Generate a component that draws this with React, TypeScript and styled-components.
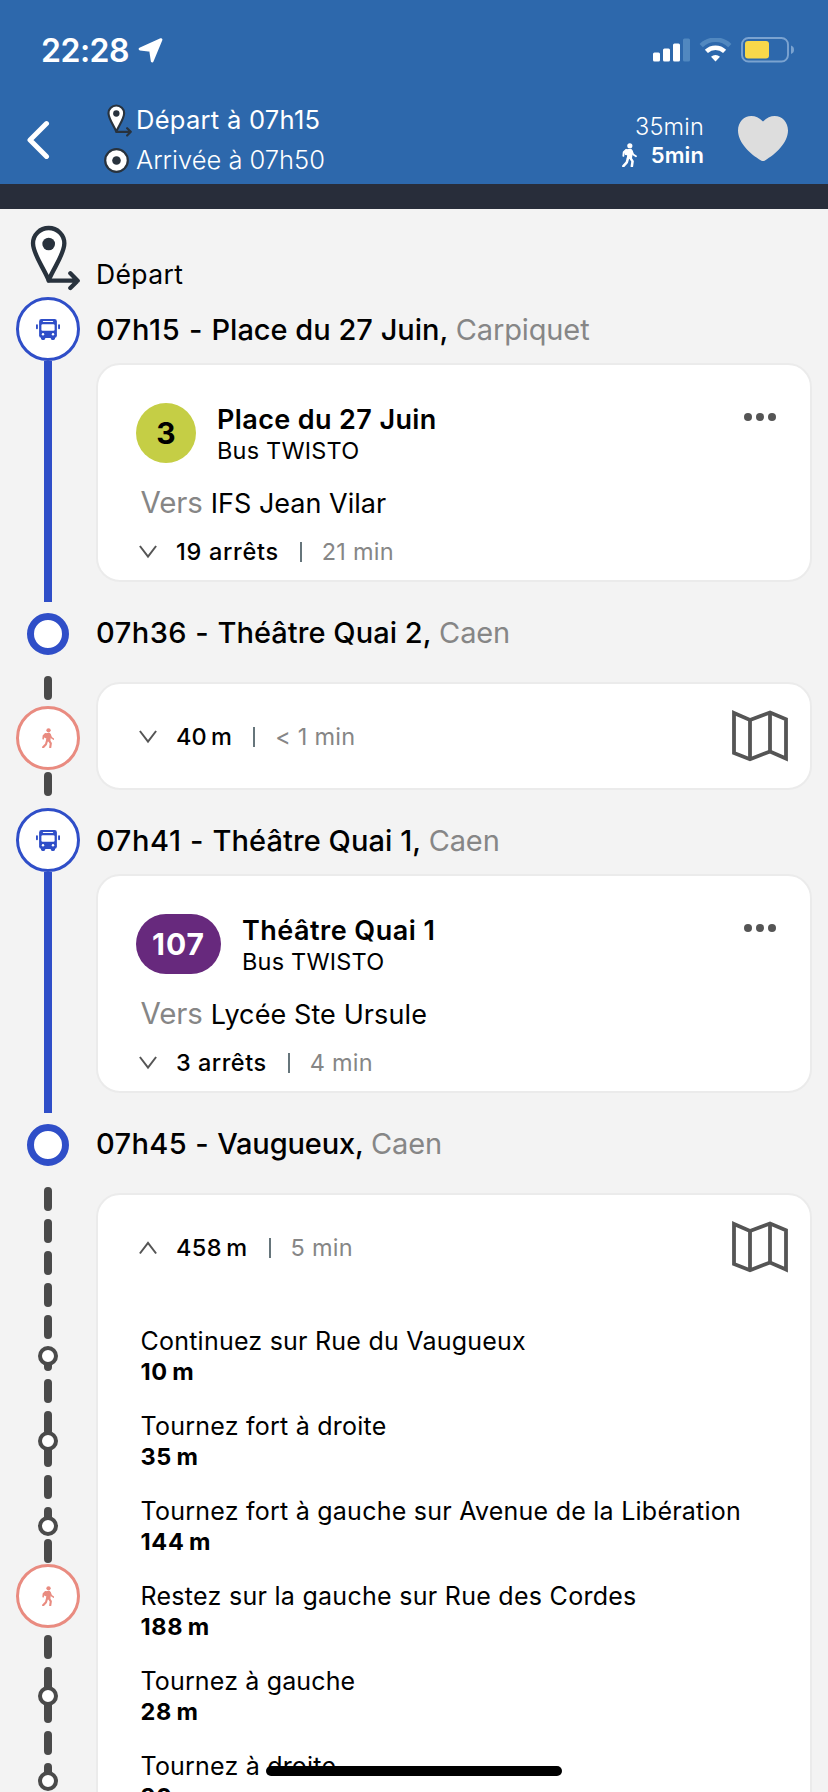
import React from 'react';
import styled, { createGlobalStyle } from 'styled-components';

const BLUE = '#2f4ec8';
const CORAL = '#e98b80';
const DASH = '#4a4a4a';
const INK = '#28323d';

const GlobalStyle = createGlobalStyle`
  * { box-sizing: border-box; }
  body {
    margin: 0;
    background: #f3f3f3;
    font-family: Inter, "Liberation Sans", sans-serif;
    color: #000;
  }
  svg { display: block; flex: none; }
`;

const Screen = styled.div`
  position: relative;
  width: 828px;
  height: 1792px;
  overflow: hidden;
  background: #f3f3f3;
`;

/* Header */

const Header = styled.header`
  height: 184px;
  background: #2d68ac;
  color: #fff;
`;

const StatusBar = styled.div`
  height: 96px;
  padding: 4px 33px 0 41px;
  display: flex;
  align-items: center;
`;

const Clock = styled.span`
  font-size: 32px;
  font-weight: 600;
  letter-spacing: -0.5px;
  margin-right: 9px;
`;

const StatusIcons = styled.div`
  margin-left: auto;
  display: flex;
  align-items: center;
  gap: 9px;
`;

const NavBar = styled.div`
  height: 88px;
  padding: 4px 40px 0 26px;
  display: flex;
`;

const BackButton = styled.button`
  width: 77px;
  height: 80px;
  padding: 0;
  border: 0;
  background: none;
  display: flex;
  align-items: center;
`;

const Schedule = styled.div`
  flex: 1;
`;

const ScheduleLine = styled.div<{ $light?: boolean; $ls: number }>`
  height: 40px;
  display: flex;
  align-items: center;
  font-size: 25.5px;
  line-height: 40px;
  font-weight: ${(p) => (p.$light ? 300 : 400)};
  letter-spacing: ${(p) => p.$ls}px;
`;

const ScheduleIcon = styled.span<{ $indent?: number }>`
  width: 33px;
  height: 40px;
  display: flex;
  align-items: center;
  padding-left: ${(p) => p.$indent ?? 0.5}px;
`;

const Durations = styled.div`
  padding-top: 12px;
  display: flex;
  flex-direction: column;
  align-items: flex-end;
`;

const TotalTime = styled.div`
  font-size: 23.5px;
  line-height: 29px;
  font-weight: 300;
  letter-spacing: 0.2px;
`;

const WalkTime = styled.div`
  display: flex;
  align-items: center;
  gap: 14px;
  font-size: 22px;
  line-height: 28px;
  font-weight: 600;
  letter-spacing: 0.1px;
`;

const Favourite = styled.div`
  margin-left: 34px;
  padding-top: 16px;
`;

const Band = styled.div`
  height: 25px;
  background: #282d3a;
`;

/* Itinerary rows: rail on the left, content on the right */

const Row = styled.section<{ $h?: number }>`
  display: grid;
  grid-template-columns: 96px 716px;
  ${(p) => (p.$h ? `height: ${p.$h}px;` : '')}
`;

const Rail = styled.div<{ $top?: number }>`
  position: relative;
  display: flex;
  flex-direction: column;
  align-items: center;
  padding-top: ${(p) => p.$top ?? 0}px;
`;

const DepartureIcon = styled.div`
  padding: 16px 0 0 30px;
`;

const DepartureLabel = styled.div`
  padding-top: 50px;
  font-size: 26.5px;
  line-height: 30px;
  letter-spacing: 0.4px;
`;

const ModeCircle = styled.div<{ $color: string }>`
  flex: none;
  width: 64px;
  height: 64px;
  border: 3px solid ${(p) => p.$color};
  border-radius: 50%;
  background: #fff;
  color: ${(p) => p.$color};
  display: flex;
  align-items: center;
  justify-content: center;
`;

const FloatingMode = styled.div`
  position: absolute;
  left: 16px;
  top: 398px;
`;

const SolidLine = styled.div`
  width: 8px;
  flex: 1;
  margin-bottom: 11px;
  background: ${BLUE};
`;

const StopRing = styled.div`
  width: 42px;
  height: 42px;
  border: 7px solid ${BLUE};
  border-radius: 50%;
  background: #fff;
`;

const Dash = styled.div<{ $before?: number; $after?: number }>`
  flex: none;
  width: 8px;
  height: 24px;
  border-radius: 4px;
  background: ${DASH};
  margin: ${(p) => p.$before ?? 0}px 0 ${(p) => p.$after ?? 0}px;
`;

const StepNode = styled.div<{ $index: number }>`
  position: absolute;
  left: 38px;
  top: ${(p) => 179.5 + p.$index * 85}px;
  width: 20px;
  height: 20px;
  border: 4px solid ${DASH};
  border-radius: 50%;
  background: #fff;
`;

const StopTitle = styled.h2<{ $h: number; $ls: number }>`
  margin: 0;
  font-size: 29px;
  font-weight: 500;
  line-height: ${(p) => p.$h}px;
  letter-spacing: ${(p) => p.$ls}px;
  white-space: nowrap;
`;

const Time = styled.span<{ $ls: number }>`
  letter-spacing: ${(p) => p.$ls}px;
`;

const City = styled.span`
  font-weight: 400;
  letter-spacing: -0.13px;
  color: #868686;
`;

/* Cards */

const Card = styled.div`
  border: 2px solid #ebebeb;
  border-radius: 24px;
  background: #fff;
`;

const BusCard = styled(Card)`
  height: 219px;
  margin-top: 1px;
  padding: 38px 34px 0 38px;
`;

const LineHeader = styled.div`
  display: flex;
  height: 63px;
`;

const LineBadge = styled.div<{ $bg: string; $fg: string; $w: number; $ls: number }>`
  width: ${(p) => p.$w}px;
  height: 60px;
  margin-right: 21px;
  border-radius: 30px;
  background: ${(p) => p.$bg};
  color: ${(p) => p.$fg};
  font-size: 30px;
  font-weight: 700;
  line-height: 61px;
  text-align: center;
  letter-spacing: ${(p) => p.$ls}px;
`;

const LineNames = styled.div`
  flex: 1;
`;

const LineStop = styled.div<{ $ls: number }>`
  padding-top: 1px;
  font-size: 27px;
  line-height: 32px;
  font-weight: 600;
  letter-spacing: ${(p) => p.$ls}px;
`;

const Network = styled.div`
  font-size: 23.5px;
  line-height: 29px;
  letter-spacing: 0.2px;
`;

const MoreDots = styled.div`
  display: flex;
  gap: 4px;
  padding-top: 10px;
`;

const Dot = styled.span`
  width: 8px;
  height: 8px;
  border-radius: 50%;
  background: #555;
`;

const Direction = styled.div`
  display: flex;
  align-items: baseline;
  gap: 8px;
  height: 40px;
  margin-top: 16px;
  padding-left: 4.5px;
  line-height: 40px;
`;

const Toward = styled.span`
  font-size: 29.5px;
  letter-spacing: -0.1px;
  color: #868686;
`;

const Destination = styled.span<{ $ls: number }>`
  font-size: 27px;
  letter-spacing: ${(p) => p.$ls}px;
`;

const Summary = styled.div<{ $top?: number }>`
  display: flex;
  align-items: center;
  height: 40px;
  margin-top: ${(p) => p.$top ?? 0}px;
  padding-left: 3px;
  font-size: 23.5px;
  line-height: 40px;
`;

const Amount = styled.span<{ $ls: number }>`
  margin-left: 19px;
  font-weight: 500;
  letter-spacing: ${(p) => p.$ls}px;
`;

const Divider = styled.span`
  width: 2px;
  height: 20px;
  margin: 0 20px 0 21px;
  background: #66757b;
`;

const Minutes = styled.span`
  letter-spacing: 0.25px;
  color: #868686;
`;

const WalkCard = styled(Card)<{ $h: number }>`
  height: ${(p) => p.$h}px;
  margin-top: 27px;
`;

const WalkHeader = styled.div`
  display: flex;
  align-items: center;
  justify-content: space-between;
  height: 104px;
  padding: 0 22px 0 38px;
`;

const Steps = styled.ol`
  list-style: none;
  margin: 27px 0 0;
  padding: 0 0 0 42.5px;
`;

const Step = styled.li`
  height: 85px;
`;

const Instruction = styled.div<{ $ls: number }>`
  font-size: 25px;
  line-height: 31px;
  letter-spacing: ${(p) => p.$ls}px;
  white-space: nowrap;
`;

const Distance = styled.div`
  font-size: 23.5px;
  line-height: 30px;
  font-weight: 700;
  letter-spacing: 0.7px;
`;

const HomeIndicator = styled.div`
  position: absolute;
  left: 266px;
  top: 1766px;
  width: 296px;
  height: 10px;
  border-radius: 5px;
  background: #000;
`;

/* Icons */

const LocationArrow = () => (
  <svg width="25" height="25" viewBox="0 0 25 25">
    <path
      d="M23 1.6 L14.2 23 L12.6 12.4 L2 11 Z"
      fill="#fff"
      stroke="#fff"
      strokeWidth="2.8"
      strokeLinejoin="round"
    />
  </svg>
);

const Signal = () => (
  <svg width="37" height="24" viewBox="0 0 37 24">
    <rect x="0" y="14.5" width="7" height="9" rx="1.5" fill="#fff" />
    <rect x="10" y="10.5" width="7" height="13" rx="1.5" fill="#fff" />
    <rect x="20" y="5.5" width="7" height="18" rx="1.5" fill="#fff" />
    <rect x="30" y="0.5" width="7" height="23" rx="1.5" fill="#5188c0" />
  </svg>
);

const Wifi = () => (
  <svg width="33" height="24" viewBox="0 0 33 24">
    <path d="M2.2 7.6 A20.3 20.3 0 0 1 30.8 7.6" fill="none" stroke="#5188c0" strokeWidth="4.6" />
    <path d="M7.4 13.4 A13 13 0 0 1 25.6 13.4" fill="none" stroke="#fff" strokeWidth="4.4" />
    <path d="M12 18.8 A6.4 6.4 0 0 1 21 18.8 L16.5 23.6 Z" fill="#fff" />
  </svg>
);

const Battery = () => (
  <svg width="54" height="26" viewBox="0 0 54 26">
    <rect x="1" y="1" width="46" height="23.5" rx="6.5" fill="none" stroke="#7ba3d0" strokeWidth="1.9" />
    <rect x="4" y="4" width="24" height="17.5" rx="3" fill="#f8d84a" />
    <path d="M50 8.6 Q53 9.6 53 12.8 Q53 16 50 17 Z" fill="#7ba3d0" />
  </svg>
);

const Back = () => (
  <svg width="24" height="40" viewBox="0 0 24 40">
    <path
      d="M20.5 3.6 L4 20 L20.5 36.4"
      fill="none"
      stroke="#fff"
      strokeWidth="5"
      strokeLinecap="round"
      strokeLinejoin="round"
    />
  </svg>
);

const Pin = ({ width, height }: { width: number; height: number }) => (
  <svg width={width} height={height} viewBox="0 0 152 198">
    <path
      d="M56 166 C42 130 9 88 9 55 A47 46 0 0 1 103 55 C103 88 70 130 56 166 Z"
      fill="#fff"
      stroke={INK}
      strokeWidth="13"
      strokeLinejoin="round"
    />
    <circle cx="56" cy="57" r="19" fill={INK} />
    <path
      d="M56 167 H142 M121 145 L143 167 L121 189"
      fill="none"
      stroke={INK}
      strokeWidth="13"
      strokeLinecap="round"
      strokeLinejoin="round"
    />
  </svg>
);

const Target = () => (
  <svg width="25" height="25" viewBox="0 0 25 25">
    <circle cx="12.5" cy="12.5" r="11.3" fill="#fff" stroke={INK} strokeWidth="2.2" />
    <circle cx="12.5" cy="12.5" r="4.3" fill={INK} />
  </svg>
);

const Walker = ({ width, height }: { width: number; height: number }) => (
  <svg width={width} height={height} viewBox="0 0 44 72">
    <circle cx="23" cy="8" r="7.6" fill="currentColor" />
    <path d="M12 18 L27 17 L32 26 L29 47 H14 L15 36 L9 35 L5 26 Z" fill="currentColor" />
    <g fill="none" stroke="currentColor" strokeLinecap="round" strokeLinejoin="round">
      <path d="M12 20 L5 27 L4 38" strokeWidth="5.5" />
      <path d="M28 22 L33 34 L41 39" strokeWidth="5.5" />
      <path d="M18 43 L14 57 L4 68" strokeWidth="7.5" />
      <path d="M24 43 L31 54 L29 68" strokeWidth="7.5" />
    </g>
  </svg>
);

const Heart = () => (
  <svg width="50" height="45" viewBox="0 0 50 45">
    <path
      d="M25 5.6 C21 1.6 17.5 0 13.3 0 C6 0 0 6 0 14.6 C0 27 12.5 38.5 23 44.4 Q25 45.4 27 44.4 C37.5 38.5 50 27 50 14.6 C50 6 44 0 36.7 0 C32.5 0 29 1.6 25 5.6 Z"
      fill="#ddd"
    />
  </svg>
);

const Bus = () => (
  <svg width="24" height="21" viewBox="0 0 24 21">
    <g fill="currentColor">
      <rect x="0" y="5.2" width="1.9" height="5" rx="0.9" />
      <rect x="22.1" y="5.2" width="1.9" height="5" rx="0.9" />
      <rect x="3.1" y="0" width="17.8" height="19" rx="2.4" />
      <rect x="5" y="16" width="4.2" height="5" rx="1.4" />
      <rect x="14.8" y="16" width="4.2" height="5" rx="1.4" />
    </g>
    <g fill="#fff">
      <rect x="6.8" y="1.9" width="10.4" height="1.2" rx="0.6" />
      <rect x="5.4" y="5.2" width="13.2" height="6.6" rx="1.2" />
      <circle cx="7" cy="15.3" r="1.2" />
      <circle cx="17" cy="15.3" r="1.2" />
    </g>
  </svg>
);

const Chevron = ({ up }: { up?: boolean }) => (
  <svg width="18" height="14" viewBox="0 0 18 14">
    <path
      d={up ? 'M0.9 12.5 L9 2 L17.1 12.5' : 'M0.9 1 L9 11.5 L17.1 1'}
      fill="none"
      stroke="#555"
      strokeWidth="2"
    />
  </svg>
);

const MapIcon = () => (
  <svg width="56" height="52" viewBox="0 0 56 52">
    <g fill="none" stroke="#555" strokeWidth="3.8">
      <path d="M2 3 L18 10 L38 2.5 L54 9.3 V48.5 L38 41.5 L18 49.2 L2 43 Z" />
      <path d="M18 10 V49 M38 2.5 V41.5" />
    </g>
  </svg>
);

/* Composed parts */

interface TitleProps {
  time: string;
  timeLs: number;
  name: string;
  nameLs: number;
  city: string;
}

const Title = ({ h, time, timeLs, name, nameLs, city }: TitleProps & { h: number }) => (
  <StopTitle $h={h} $ls={nameLs}>
    <Time $ls={timeLs}>{time} - </Time>
    {name}, <City>{city}</City>
  </StopTitle>
);

interface BusLegProps {
  title: TitleProps;
  line: string;
  badge: { bg: string; fg: string; w: number; ls: number };
  stop: string;
  stopLs: number;
  to: string;
  toLs: number;
  stops: string;
  stopsLs: number;
  duration: string;
}

const BusLeg = (p: BusLegProps) => (
  <Row $h={316}>
    <Rail>
      <ModeCircle $color={BLUE}>
        <Bus />
      </ModeCircle>
      <SolidLine />
    </Rail>
    <div>
      <Title h={65} {...p.title} />
      <BusCard>
        <LineHeader>
          <LineBadge $bg={p.badge.bg} $fg={p.badge.fg} $w={p.badge.w} $ls={p.badge.ls}>
            {p.line}
          </LineBadge>
          <LineNames>
            <LineStop $ls={p.stopLs}>{p.stop}</LineStop>
            <Network>Bus TWISTO</Network>
          </LineNames>
          <MoreDots>
            <Dot />
            <Dot />
            <Dot />
          </MoreDots>
        </LineHeader>
        <Direction>
          <Toward>Vers</Toward>
          <Destination $ls={p.toLs}>{p.to}</Destination>
        </Direction>
        <Summary $top={10}>
          <Chevron />
          <Amount $ls={p.stopsLs}>{p.stops}</Amount>
          <Divider />
          <Minutes>{p.duration}</Minutes>
        </Summary>
      </BusCard>
    </div>
  </Row>
);

const Stop = (p: TitleProps) => (
  <Row $h={42}>
    <Rail>
      <StopRing />
    </Rail>
    <Title h={39} {...p} />
  </Row>
);

const steps: { text: string; ls: number; distance: string }[] = [
  { text: 'Continuez sur Rue du Vaugueux', ls: 0.23, distance: '10\u2009m' },
  { text: 'Tournez fort à droite', ls: 0.24, distance: '35\u2009m' },
  { text: 'Tournez fort à gauche sur Avenue de la Libération', ls: 0.24, distance: '144\u2009m' },
  { text: 'Restez sur la gauche sur Rue des Cordes', ls: 0.28, distance: '188\u2009m' },
  { text: 'Tournez à gauche', ls: 0.15, distance: '28\u2009m' },
  { text: 'Tournez à droite', ls: 0.2, distance: '20\u2009m' },
];

export default function App() {
  return (
    <Screen>
      <GlobalStyle />
      <Header>
        <StatusBar>
          <Clock>22:28</Clock>
          <LocationArrow />
          <StatusIcons>
            <Signal />
            <Wifi />
            <Battery />
          </StatusIcons>
        </StatusBar>
        <NavBar>
          <BackButton aria-label="Retour">
            <Back />
          </BackButton>
          <Schedule>
            <ScheduleLine $ls={0.28}>
              <ScheduleIcon $indent={4}>
                <Pin width={25.3} height={33} />
              </ScheduleIcon>
              Départ à 07h15
            </ScheduleLine>
            <ScheduleLine $light $ls={0}>
              <ScheduleIcon>
                <Target />
              </ScheduleIcon>
              Arrivée à 07h50
            </ScheduleLine>
          </Schedule>
          <Durations>
            <TotalTime>35min</TotalTime>
            <WalkTime>
              <Walker width={15} height={24.5} />
              5min
            </WalkTime>
          </Durations>
          <Favourite>
            <Heart />
          </Favourite>
        </NavBar>
      </Header>
      <Band />

      <Row $h={88}>
        <DepartureIcon>
          <Pin width={50.7} height={66} />
        </DepartureIcon>
        <DepartureLabel>Départ</DepartureLabel>
      </Row>

      <BusLeg
        title={{ time: '07h15', timeLs: 0.7, name: 'Place du 27 Juin', nameLs: 0, city: 'Carpiquet' }}
        line="3"
        badge={{ bg: '#c5ce45', fg: '#000', w: 60, ls: 0 }}
        stop="Place du 27 Juin"
        stopLs={0.38}
        to="IFS Jean Vilar"
        toLs={0}
        stops="19 arrêts"
        stopsLs={0.7}
        duration="21 min"
      />
      <Stop time="07h36" timeLs={0.5} name="Théâtre Quai 2" nameLs={0.05} city="Caen" />

      <Row $h={153}>
        <Rail>
          <Dash $before={21} $after={6} />
          <ModeCircle $color={CORAL}>
            <Walker width={12.5} height={20.5} />
          </ModeCircle>
          <Dash $before={2} />
        </Rail>
        <WalkCard $h={108}>
          <WalkHeader>
            <Summary $top={1}>
              <Chevron />
              <Amount $ls={0.15}>{'40\u2009m'}</Amount>
              <Divider />
              <Minutes>&lt; 1 min</Minutes>
            </Summary>
            <MapIcon />
          </WalkHeader>
        </WalkCard>
      </Row>

      <BusLeg
        title={{ time: '07h41', timeLs: 0.65, name: 'Théâtre Quai 1', nameLs: 0.07, city: 'Caen' }}
        line="107"
        badge={{ bg: '#67297d', fg: '#fff', w: 85, ls: 1 }}
        stop="Théâtre Quai 1"
        stopLs={0.48}
        to="Lycée Ste Ursule"
        toLs={0.1}
        stops="3 arrêts"
        stopsLs={0.5}
        duration="4 min"
      />
      <Stop time="07h45" timeLs={0.4} name="Vaugueux" nameLs={-0.15} city="Caen" />

      <Row>
        <Rail $top={21}>
          {Array.from({ length: 19 }, (_, i) => (
            <Dash key={i} $after={8} />
          ))}
          {[0, 1, 2, 4, 5].map((i) => (
            <StepNode key={i} $index={i} />
          ))}
          <FloatingMode>
            <ModeCircle $color={CORAL}>
              <Walker width={12.5} height={20.5} />
            </ModeCircle>
          </FloatingMode>
        </Rail>
        <WalkCard $h={760}>
          <WalkHeader>
            <Summary $top={2}>
              <Chevron up />
              <Amount $ls={0.37}>{'458\u2009m'}</Amount>
              <Divider />
              <Minutes>5 min</Minutes>
            </Summary>
            <MapIcon />
          </WalkHeader>
          <Steps>
            {steps.map((s) => (
              <Step key={s.text}>
                <Instruction $ls={s.ls}>{s.text}</Instruction>
                <Distance>{s.distance}</Distance>
              </Step>
            ))}
          </Steps>
        </WalkCard>
      </Row>

      <HomeIndicator />
    </Screen>
  );
}
